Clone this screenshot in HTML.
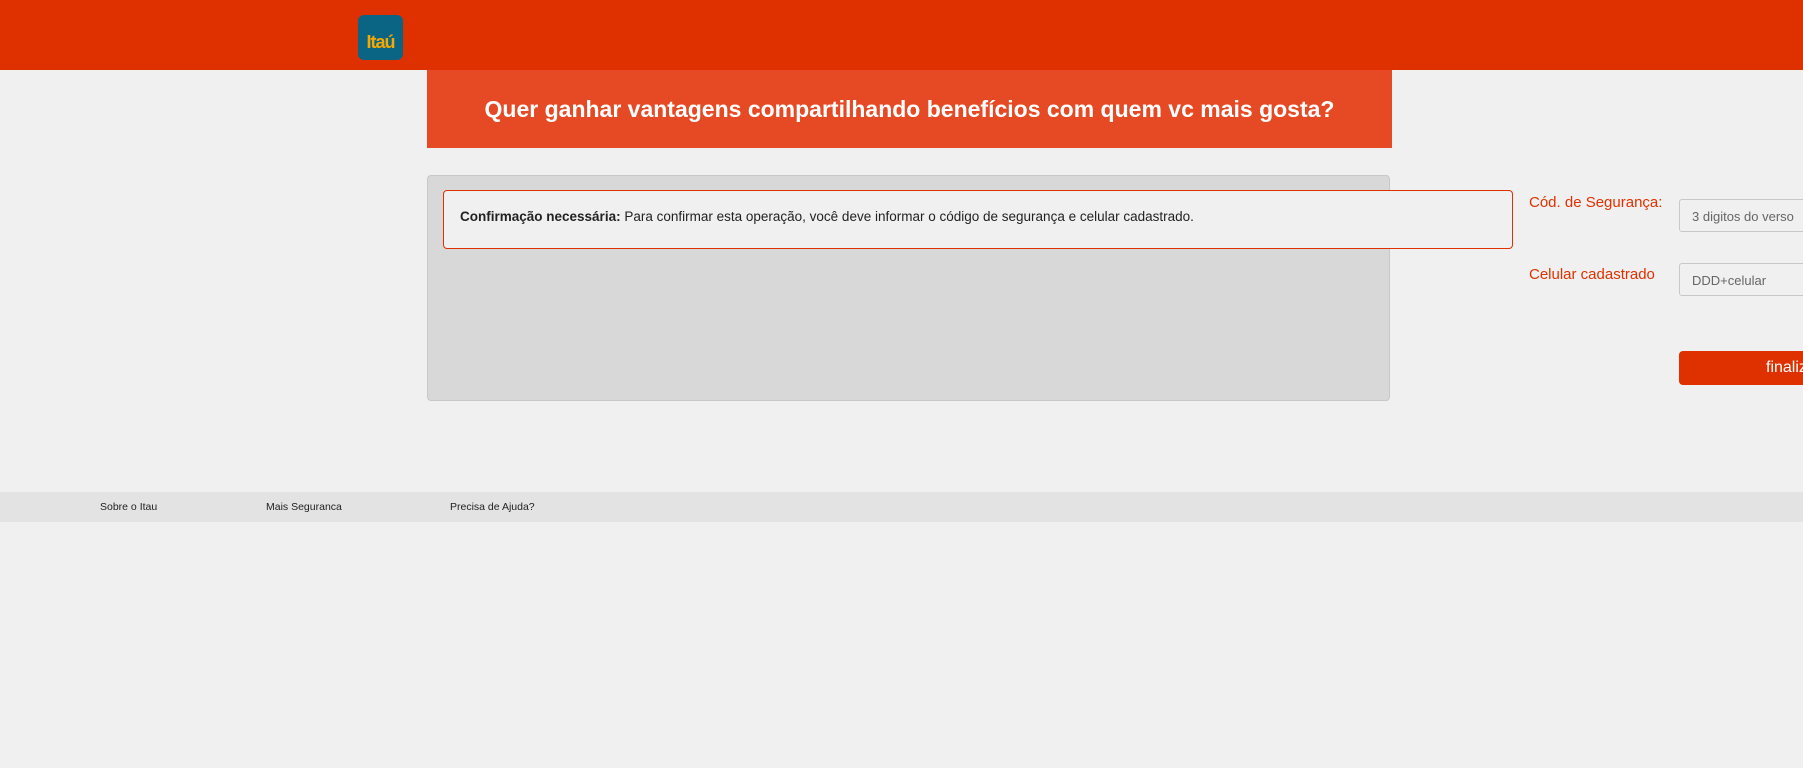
<!DOCTYPE html>
<html><head><meta charset="utf-8"><style>
*{margin:0;padding:0;box-sizing:border-box}
body{width:1803px;height:768px;background:#f0f0f0;font-family:"Liberation Sans",sans-serif;position:relative;overflow:hidden}
.hdr{position:absolute;left:0;top:0;width:1803px;height:70px;background:#df3100}
.logo{position:absolute;left:358px;top:15px;width:45px;height:45px;background:#0a6585;border-radius:6px;color:#f5a800;font-weight:bold;font-size:18px;line-height:54px;text-align:center;letter-spacing:-1px}
.ban{position:absolute;left:427px;top:70px;width:965px;height:78px;background:#e64a24;color:#fff;font-size:23px;font-weight:bold;text-align:center;line-height:78px}
.pan{position:absolute;left:427px;top:175px;width:963px;height:226px;background:#d8d8d8;border:1px solid #c8c8c8;border-radius:4px}
.alert{position:absolute;left:443px;top:190px;width:1070px;height:59px;background:#f0f0f0;border:1px solid #df3100;border-radius:4px;font-size:13.5px;color:#222;padding:18px 0 0 16px}
.lbl{position:absolute;left:1529px;color:#df3100;font-size:15px}
.inp{position:absolute;left:1679px;width:200px;height:33px;border:1px solid #c8c8c8;border-radius:3px;background:#f0f0f0;color:#666;font-size:13px;padding:9px 0 0 12px}
.btn{position:absolute;left:1679px;top:351px;width:200px;height:34px;background:#df3100;border-radius:4px;color:#fff;font-size:16px;line-height:34px;padding-left:87px}
.ftr{position:absolute;left:0;top:492px;width:1803px;height:30px;background:#e3e3e3;font-size:10.5px;color:#222}
.ftr span{position:absolute;top:9px}
</style></head><body>
<div class="hdr"><div class="logo">Itaú</div></div>
<div class="ban">Quer ganhar vantagens compartilhando benefícios com quem vc mais gosta?</div>
<div class="pan"></div>
<div class="alert"><b>Confirmação necessária:</b> Para confirmar esta operação, você deve informar o código de segurança e celular cadastrado.</div>
<div class="lbl" style="top:194px">Cód. de Segurança:</div>
<div class="inp" style="top:199px">3 digitos do verso</div>
<div class="lbl" style="top:266px">Celular cadastrado</div>
<div class="inp" style="top:263px">DDD+celular</div>
<div class="btn">finalizar</div>
<div class="ftr"><span style="left:100px">Sobre o Itau</span><span style="left:266px">Mais Seguranca</span><span style="left:450px">Precisa de Ajuda?</span></div>
</body></html>
